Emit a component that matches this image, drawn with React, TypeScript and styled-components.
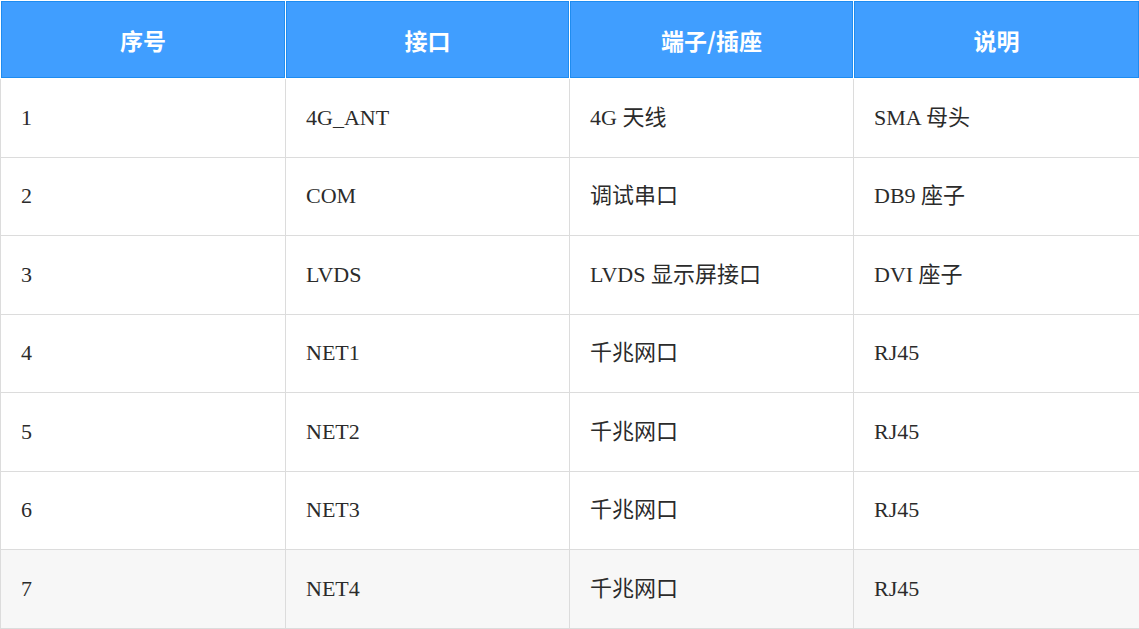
import React from 'react';
import styled, { createGlobalStyle } from 'styled-components';

const GlobalStyle = createGlobalStyle`
  html, body {
    margin: 0;
    padding: 0;
    background: #ffffff;
  }
`;

interface PortRow {
  id: number;
  name: string;
  kind: string;
  note: string;
}

const rows: PortRow[] = [
  { id: 1, name: '4G_ANT', kind: '4G 天线', note: 'SMA 母头' },
  { id: 2, name: 'COM', kind: '调试串口', note: 'DB9 座子' },
  { id: 3, name: 'LVDS', kind: 'LVDS 显示屏接口', note: 'DVI 座子' },
  { id: 4, name: 'NET1', kind: '千兆网口', note: 'RJ45' },
  { id: 5, name: 'NET2', kind: '千兆网口', note: 'RJ45' },
  { id: 6, name: 'NET3', kind: '千兆网口', note: 'RJ45' },
  { id: 7, name: 'NET4', kind: '千兆网口', note: 'RJ45' },
];

const Table = styled.table`
  width: 1139px;
  border-collapse: collapse;
  table-layout: fixed;
  font-family: "Liberation Serif", "Noto Sans CJK SC", serif;
  font-size: 22px;
  line-height: 24px;
  color: #2b2b2b;
`;

const HeadCell = styled.th`
  height: 77px;
  padding: 0;
  background: #409eff;
  color: #ffffff;
  font-family: "Noto Sans CJK SC", sans-serif;
  font-weight: 700;
  font-size: 23px;
  text-align: center;
  border: 1px solid #ffffff;
  box-shadow: inset 0 0 0 1px #1e8cf0;
`;

interface BodyRowProps {
  shaded?: boolean;
}

const BodyRow = styled.tr<BodyRowProps>`
  background: ${(props: BodyRowProps) => (props.shaded ? '#f7f7f7' : '#ffffff')};
`;

const Cell = styled.td`
  height: 77.5px;
  padding: 0 0 0 20px;
  border: 1px solid #dcdcdc;
  text-align: left;
  vertical-align: middle;
  white-space: nowrap;
`;

const App: React.FC = () => {
  return (
    <>
      <GlobalStyle />
      <Table>
        <colgroup>
          <col style={{ width: 285 }} />
          <col style={{ width: 284 }} />
          <col style={{ width: 284 }} />
          <col style={{ width: 286 }} />
        </colgroup>
        <thead>
          <tr>
            <HeadCell>序号</HeadCell>
            <HeadCell>接口</HeadCell>
            <HeadCell>端子/插座</HeadCell>
            <HeadCell>说明</HeadCell>
          </tr>
        </thead>
        <tbody>
          {rows.map((row, i) => (
            <BodyRow key={row.id} shaded={i === rows.length - 1}>
              <Cell>{row.id}</Cell>
              <Cell>{row.name}</Cell>
              <Cell>{row.kind}</Cell>
              <Cell>{row.note}</Cell>
            </BodyRow>
          ))}
        </tbody>
      </Table>
    </>
  );
};

export default App;
